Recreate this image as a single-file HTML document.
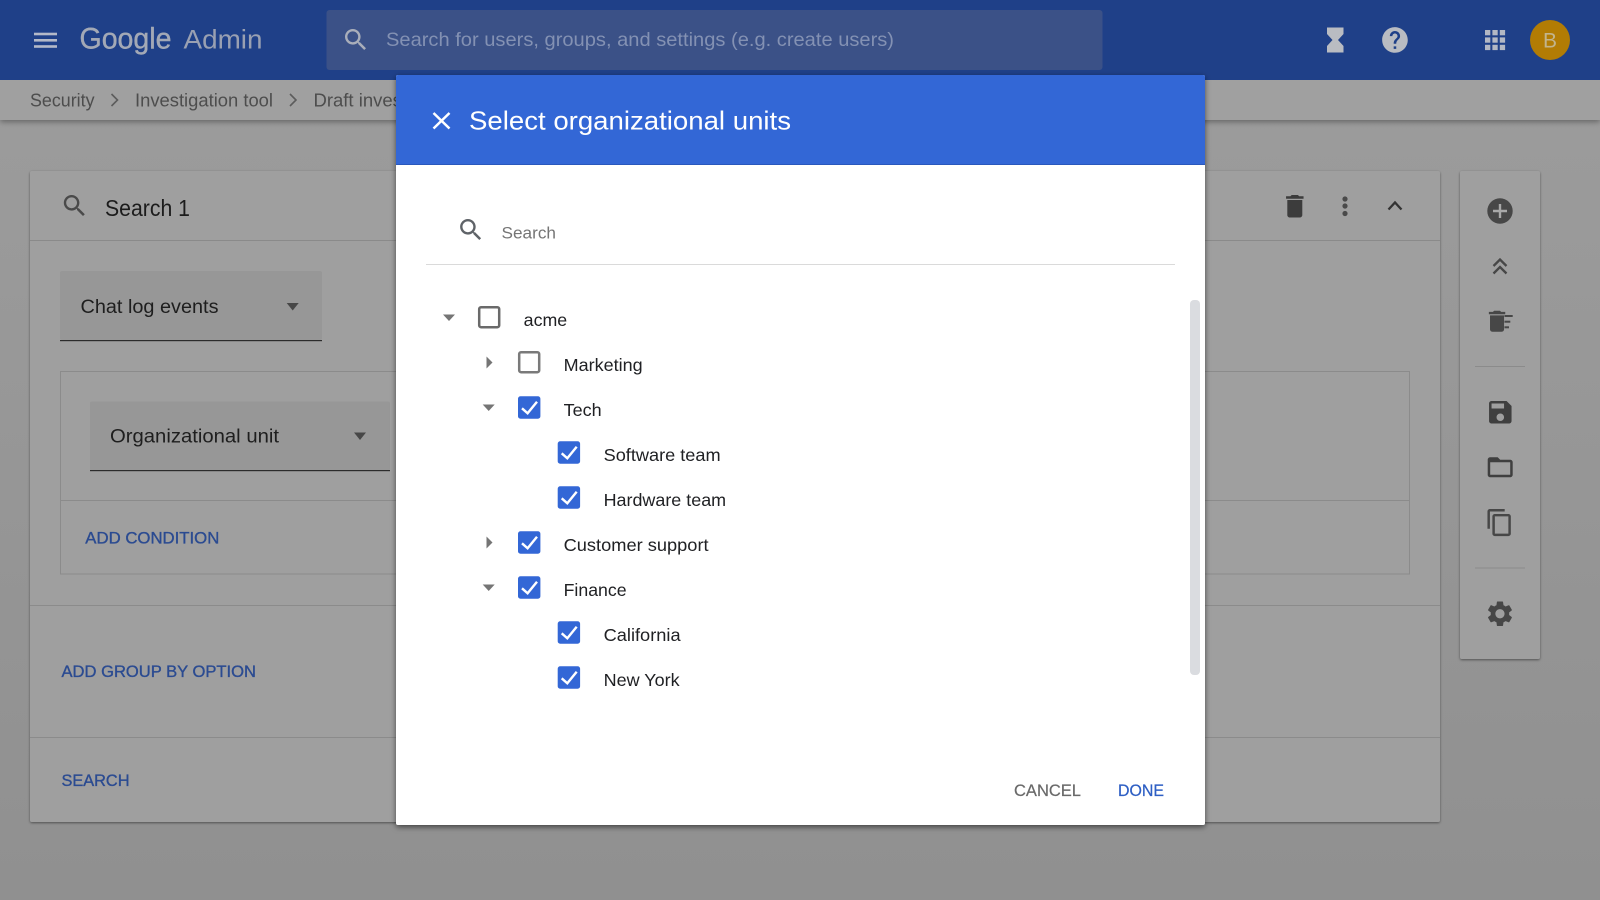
<!DOCTYPE html>
<html lang="en">
<head>
<meta charset="utf-8">
<title>Google Admin</title>
<style>
html,body{margin:0;padding:0;width:1600px;height:900px;overflow:hidden;background:#989898}
svg{display:block}
text{font-family:"Liberation Sans",Arial,sans-serif}
.act{font-size:16.5px;fill:#2b4b91;stroke:#2b4b91;stroke-width:.35px}
</style>
</head>
<body>
<svg xmlns="http://www.w3.org/2000/svg" width="1600" height="900" viewBox="0 0 1600 900">
<defs>
<linearGradient id="bg" x1="0" y1="0" x2="0" y2="1"><stop offset="0" stop-color="#9d9d9d"/><stop offset="1" stop-color="#909090"/></linearGradient>
<filter id="sh" x="-5%" y="-5%" width="110%" height="110%"><feDropShadow dx="0" dy="1" stdDeviation="1.2" flood-color="#000" flood-opacity=".45"/></filter>
<filter id="bar" x="-2%" y="-20%" width="104%" height="150%"><feDropShadow dx="0" dy="2" stdDeviation="3" flood-color="#000" flood-opacity=".35"/></filter>
<filter id="modal" x="-5%" y="-5%" width="110%" height="110%"><feDropShadow dx="0" dy="2" stdDeviation="3" flood-color="#000" flood-opacity=".55"/></filter>
<path id="srch" d="M15.5 14h-.79l-.28-.27C15.41 12.59 16 11.11 16 9.5 16 5.91 13.09 3 9.5 3S3 5.91 3 9.5 5.91 16 9.5 16c1.61 0 3.09-.59 4.23-1.57l.27.28v.79l5 4.99L20.49 19l-4.99-5zm-6 0C7.01 14 5 11.99 5 9.5S7.01 5 9.5 5 14 7.01 14 9.5 11.99 14 9.5 14z"/>
<g id="on"><rect width="22.4" height="22.4" rx="2.5" fill="#3367d6"/><path d="M4 12l5.6 5L19 5.4" fill="none" stroke="#fff" stroke-width="2.4"/></g>
</defs>

<rect width="1600" height="900" fill="url(#bg)"/>

<!-- breadcrumb -->
<rect y="78" width="1600" height="42" fill="#a0a0a0" filter="url(#bar)"/>
<text x="30" y="106.500" font-size="18" fill="#4d4d4d" textLength="64.500" lengthAdjust="spacingAndGlyphs">Security</text>
<path d="M111.500 94l6 6-6 6" fill="none" stroke="#5c5c5c" stroke-width="1.600"/>
<text x="135" y="106.500" font-size="18" fill="#4d4d4d" textLength="138" lengthAdjust="spacingAndGlyphs">Investigation tool</text>
<path d="M290 94l6 6-6 6" fill="none" stroke="#5c5c5c" stroke-width="1.600"/>
<text x="313.500" y="106.500" font-size="18" fill="#4d4d4d" textLength="148" lengthAdjust="spacingAndGlyphs">Draft investigation</text>

<!-- app bar -->
<rect width="1600" height="80" fill="#1f4088"/>
<rect x="34" y="32.700" width="23" height="2.600" fill="#b3b9c8"/><rect x="34" y="39" width="23" height="2.600" fill="#b3b9c8"/><rect x="34" y="45.200" width="23" height="2.600" fill="#b3b9c8"/>
<text x="79.500" y="48.500" font-size="30" fill="#a3a9b6" stroke="#a3a9b6" stroke-width=".4" textLength="92" lengthAdjust="spacingAndGlyphs">Google</text>
<text x="183.500" y="48.500" font-size="27" fill="#99a0b2" textLength="79" lengthAdjust="spacingAndGlyphs">Admin</text>
<rect x="326.500" y="10" width="776" height="60" rx="3" fill="#3b5187"/>
<use href="#srch" transform="translate(341.400 25.400) scale(1.200)" fill="#a9aeba"/>
<text x="386" y="46" font-size="19.500" fill="#8391b3" textLength="508" lengthAdjust="spacingAndGlyphs">Search for users, groups, and settings (e.g. create users)</text>
<path d="M1327 27.500h16.500v6.500l-5.500 6 5.500 6v6.500h-16.500v-6.500l5.500-6-5.500-6z" fill="#b9bcc2"/>
<path d="M12 2C6.48 2 2 6.48 2 12s4.48 10 10 10 10-4.48 10-10S17.52 2 12 2zm1 17h-2v-2h2v2zm2.07-7.75l-.9.92C13.45 12.9 13 13.5 13 15h-2v-.5c0-1.1.45-2.1 1.17-2.83l1.24-1.26c.37-.36.59-.86.59-1.41 0-1.1-.9-2-2-2s-2 .9-2 2H8c0-2.21 1.79-4 4-4s4 1.79 4 4c0 .88-.36 1.68-.93 2.25z" transform="translate(1379.600 24.600) scale(1.280)" fill="#b9bcc2"/>
<g fill="#b3b8c4">
<rect x="1485" y="30" width="5.300" height="5.300"/><rect x="1492.400" y="30" width="5.300" height="5.300"/><rect x="1499.800" y="30" width="5.300" height="5.300"/>
<rect x="1485" y="37.400" width="5.300" height="5.300"/><rect x="1492.400" y="37.400" width="5.300" height="5.300"/><rect x="1499.800" y="37.400" width="5.300" height="5.300"/>
<rect x="1485" y="44.800" width="5.300" height="5.300"/><rect x="1492.400" y="44.800" width="5.300" height="5.300"/><rect x="1499.800" y="44.800" width="5.300" height="5.300"/>
</g>
<circle cx="1550" cy="40" r="20" fill="#b27c04"/>
<text x="1550" y="47.500" font-size="21" fill="#c2b48d" text-anchor="middle">B</text>

<!-- search card -->
<rect x="30" y="171" width="1410" height="651" rx="2" fill="#9f9f9f" filter="url(#sh)"/>
<rect x="30" y="240" width="1410" height="1" fill="#8a8a8a"/>
<use href="#srch" transform="translate(60.200 191.400) scale(1.200)" fill="#4a4a4a"/>
<text x="105" y="216" font-size="23" fill="#1c1c1c" textLength="85" lengthAdjust="spacingAndGlyphs">Search 1</text>
<rect x="60" y="271" width="262" height="69" rx="2" fill="#979797"/>
<rect x="60" y="340" width="262" height="1.200" fill="#2c2c2c"/>
<text x="80.500" y="313" font-size="19" fill="#1e1e1e" textLength="138" lengthAdjust="spacingAndGlyphs">Chat log events</text>
<path d="M286.700 303h12l-6 7.500z" fill="#474747"/>
<rect x="60.500" y="371.500" width="1349" height="202.500" fill="none" stroke="#8b8b8b"/>
<rect x="60" y="500" width="1350" height="1" fill="#8b8b8b"/>
<rect x="90" y="401.500" width="300" height="69" rx="2" fill="#979797"/>
<rect x="90" y="470" width="300" height="1.200" fill="#2c2c2c"/>
<text x="110" y="442.500" font-size="19" fill="#1e1e1e" textLength="169" lengthAdjust="spacingAndGlyphs">Organizational unit</text>
<path d="M354 432.500h12l-6 7.500z" fill="#474747"/>
<text class="act" x="85.300" y="543.500" textLength="134" lengthAdjust="spacingAndGlyphs">ADD CONDITION</text>
<rect x="30" y="605" width="1410" height="1" fill="#8b8b8b"/>
<text class="act" x="61.500" y="677" textLength="194.500" lengthAdjust="spacingAndGlyphs">ADD GROUP BY OPTION</text>
<rect x="30" y="737" width="1410" height="1" fill="#8b8b8b"/>
<text class="act" x="61.500" y="786" textLength="68" lengthAdjust="spacingAndGlyphs">SEARCH</text>

<path d="M6 19c0 1.100.9 2 2 2h8c1.100 0 2-.9 2-2V7H6v12zM19 4h-3.500l-1-1h-5l-1 1H5v2h14V4z" transform="translate(1279.800 191.300) scale(1.250)" fill="#3c3c3c"/>
<g fill="#4a4a4a"><circle cx="1345" cy="199" r="2.600"/><circle cx="1345" cy="206" r="2.600"/><circle cx="1345" cy="213.500" r="2.600"/></g>
<path d="M1388.500 209.500l6.500-7 6.500 7" fill="none" stroke="#333" stroke-width="2.300"/>

<!-- right toolbar -->
<rect x="1460" y="171" width="80" height="488" rx="2" fill="#9f9f9f" filter="url(#sh)"/>
<circle cx="1500" cy="211" r="12.700" fill="#474747"/>
<path d="M1500 204v14M1493 211h14" stroke="#a8a8a8" stroke-width="2.400"/>
<path d="M1493.500 266l6.500-6.500 6.500 6.500M1493.500 273.500l6.500-6.500 6.500 6.500" fill="none" stroke="#474747" stroke-width="2.300"/>
<path d="M6 19c0 1.100.9 2 2 2h8c1.100 0 2-.9 2-2V7H6v12zM19 4h-3.500l-1-1h-5l-1 1H5v2h14V4z" transform="translate(1483 307.200) scale(1.170)" fill="#474747"/>
<g fill="#474747"><rect x="1504.500" y="315" width="8.200" height="2"/><rect x="1504.500" y="320.700" width="5.800" height="2"/><rect x="1504.500" y="326.300" width="4.500" height="2"/></g>
<rect x="1475" y="366" width="50" height="1" fill="#8b8b8b"/>
<path d="M17 3H5c-1.110 0-2 .9-2 2v14c0 1.100.89 2 2 2h14c1.100 0 2-.9 2-2V7l-4-4zm-5 16c-1.660 0-3-1.340-3-3s1.340-3 3-3 3 1.340 3 3-1.340 3-3 3zm3-10H5V5h10v4z" transform="translate(1485.300 397.300) scale(1.250)" fill="#3f3f3f"/>
<path d="M20 6h-8l-2-2H4c-1.100 0-1.990.9-1.990 2L2 18c0 1.100.9 2 2 2h16c1.100 0 2-.9 2-2V8c0-1.100-.9-2-2-2zm0 12H4V8h16v10z" transform="translate(1485.200 452.300) scale(1.250)" fill="#3f3f3f"/>
<path d="M16 1H4c-1.100 0-2 .9-2 2v14h2V3h12V1zm3 4H8c-1.100 0-2 .9-2 2v14c0 1.100.9 2 2 2h11c1.100 0 2-.9 2-2V7c0-1.100-.9-2-2-2zm0 16H8V7h11v14z" transform="translate(1485 507.800) scale(1.230)" fill="#474747"/>
<rect x="1475" y="567.500" width="50" height="1" fill="#8b8b8b"/>
<path d="M19.140 12.940c.04-.3.06-.61.06-.94 0-.32-.02-.64-.07-.94l2.030-1.580c.18-.14.23-.41.12-.61l-1.920-3.320c-.12-.22-.37-.29-.59-.22l-2.390.96c-.5-.38-1.030-.7-1.620-.94l-.36-2.540c-.04-.24-.24-.41-.48-.41h-3.840c-.24 0-.43.17-.47.41l-.36 2.540c-.59.24-1.130.57-1.620.94l-2.390-.96c-.22-.08-.47 0-.59.22L2.740 8.870c-.12.21-.08.47.12.61l2.030 1.580c-.05.3-.09.63-.09.94s.02.64.07.94l-2.030 1.580c-.18.14-.23.41-.12.61l1.920 3.320c.12.22.37.29.59.22l2.390-.96c.5.38 1.030.7 1.620.94l.36 2.540c.05.24.24.41.48.41h3.840c.24 0 .44-.17.47-.41l.36-2.540c.59-.24 1.130-.56 1.620-.94l2.390.96c.22.08.47 0 .59-.22l1.920-3.320c.12-.22.07-.47-.12-.61l-2.010-1.580zM12 15.600c-1.980 0-3.600-1.620-3.600-3.600s1.620-3.600 3.600-3.600 3.600 1.620 3.600 3.600-1.620 3.600-3.600 3.600z" transform="translate(1484.600 598.400) scale(1.280)" fill="#474747"/>

<!-- modal -->
<rect x="396" y="75" width="809" height="750" rx="2" fill="#fff" filter="url(#modal)"/>
<path d="M396 165V77a2 2 0 0 1 2-2h805a2 2 0 0 1 2 2v88z" fill="#3367d6"/>
<rect x="396" y="164" width="809" height="1" fill="#2a58bc"/>
<path d="M433.500 113l16 15.500M449.500 113l-16 15.500" stroke="#fff" stroke-width="2.500" fill="none"/>
<text x="469" y="129.500" font-size="26" fill="#fff" textLength="322" lengthAdjust="spacingAndGlyphs">Select organizational units</text>

<use href="#srch" transform="translate(456.500 215.400) scale(1.200)" fill="#5f6368"/>
<text x="501.500" y="238.500" font-size="17" fill="#757575" textLength="54.500" lengthAdjust="spacingAndGlyphs">Search</text>
<rect x="426" y="264" width="749" height="1" fill="#dadada"/>

<!-- tree -->
<path d="M443 314.500h12l-6 6.500z" fill="#757575"/>
<rect x="479.200" y="307.200" width="20" height="20" rx="1.800" fill="none" stroke="#6a6a6a" stroke-width="2.500"/>
<text x="523.700" y="326" font-size="17.500" fill="#202124" textLength="43.500" lengthAdjust="spacingAndGlyphs">acme</text>

<path d="M486.500 356.500l6 6-6 6z" fill="#757575"/>
<rect x="519.200" y="352.200" width="20" height="20" rx="1.800" fill="none" stroke="#7a7a7a" stroke-width="2.500"/>
<text x="563.600" y="371" font-size="17.500" fill="#202124" textLength="79" lengthAdjust="spacingAndGlyphs">Marketing</text>

<path d="M482.700 404.500h12l-6 6.500z" fill="#757575"/>
<use href="#on" x="518" y="396.300"/>
<text x="563.600" y="416" font-size="17.500" fill="#202124" textLength="38" lengthAdjust="spacingAndGlyphs">Tech</text>

<use href="#on" x="557.700" y="441.300"/>
<text x="603.600" y="461" font-size="17.500" fill="#202124" textLength="117" lengthAdjust="spacingAndGlyphs">Software team</text>

<use href="#on" x="557.700" y="486.300"/>
<text x="603.600" y="506" font-size="17.500" fill="#202124" textLength="122.500" lengthAdjust="spacingAndGlyphs">Hardware team</text>

<path d="M486.500 536.500l6 6-6 6z" fill="#757575"/>
<use href="#on" x="518" y="531.300"/>
<text x="563.600" y="551" font-size="17.500" fill="#202124" textLength="145" lengthAdjust="spacingAndGlyphs">Customer support</text>

<path d="M482.700 584.500h12l-6 6.500z" fill="#757575"/>
<use href="#on" x="518" y="576.300"/>
<text x="563.600" y="596" font-size="17.500" fill="#202124" textLength="63" lengthAdjust="spacingAndGlyphs">Finance</text>

<use href="#on" x="557.700" y="621.300"/>
<text x="603.600" y="641" font-size="17.500" fill="#202124" textLength="77" lengthAdjust="spacingAndGlyphs">California</text>

<use href="#on" x="557.700" y="666.300"/>
<text x="603.600" y="686" font-size="17.500" fill="#202124" textLength="76" lengthAdjust="spacingAndGlyphs">New York</text>

<rect x="1190" y="300" width="10" height="375" rx="4" fill="#dadce0"/>

<text x="1014" y="796" font-size="16.500" fill="#696969" stroke="#696969" stroke-width=".2" textLength="67" lengthAdjust="spacingAndGlyphs">CANCEL</text>
<text x="1118" y="796" font-size="16.500" fill="#2e5fc4" stroke="#2e5fc4" stroke-width=".25" textLength="46" lengthAdjust="spacingAndGlyphs">DONE</text>
</svg>
</body>
</html>
